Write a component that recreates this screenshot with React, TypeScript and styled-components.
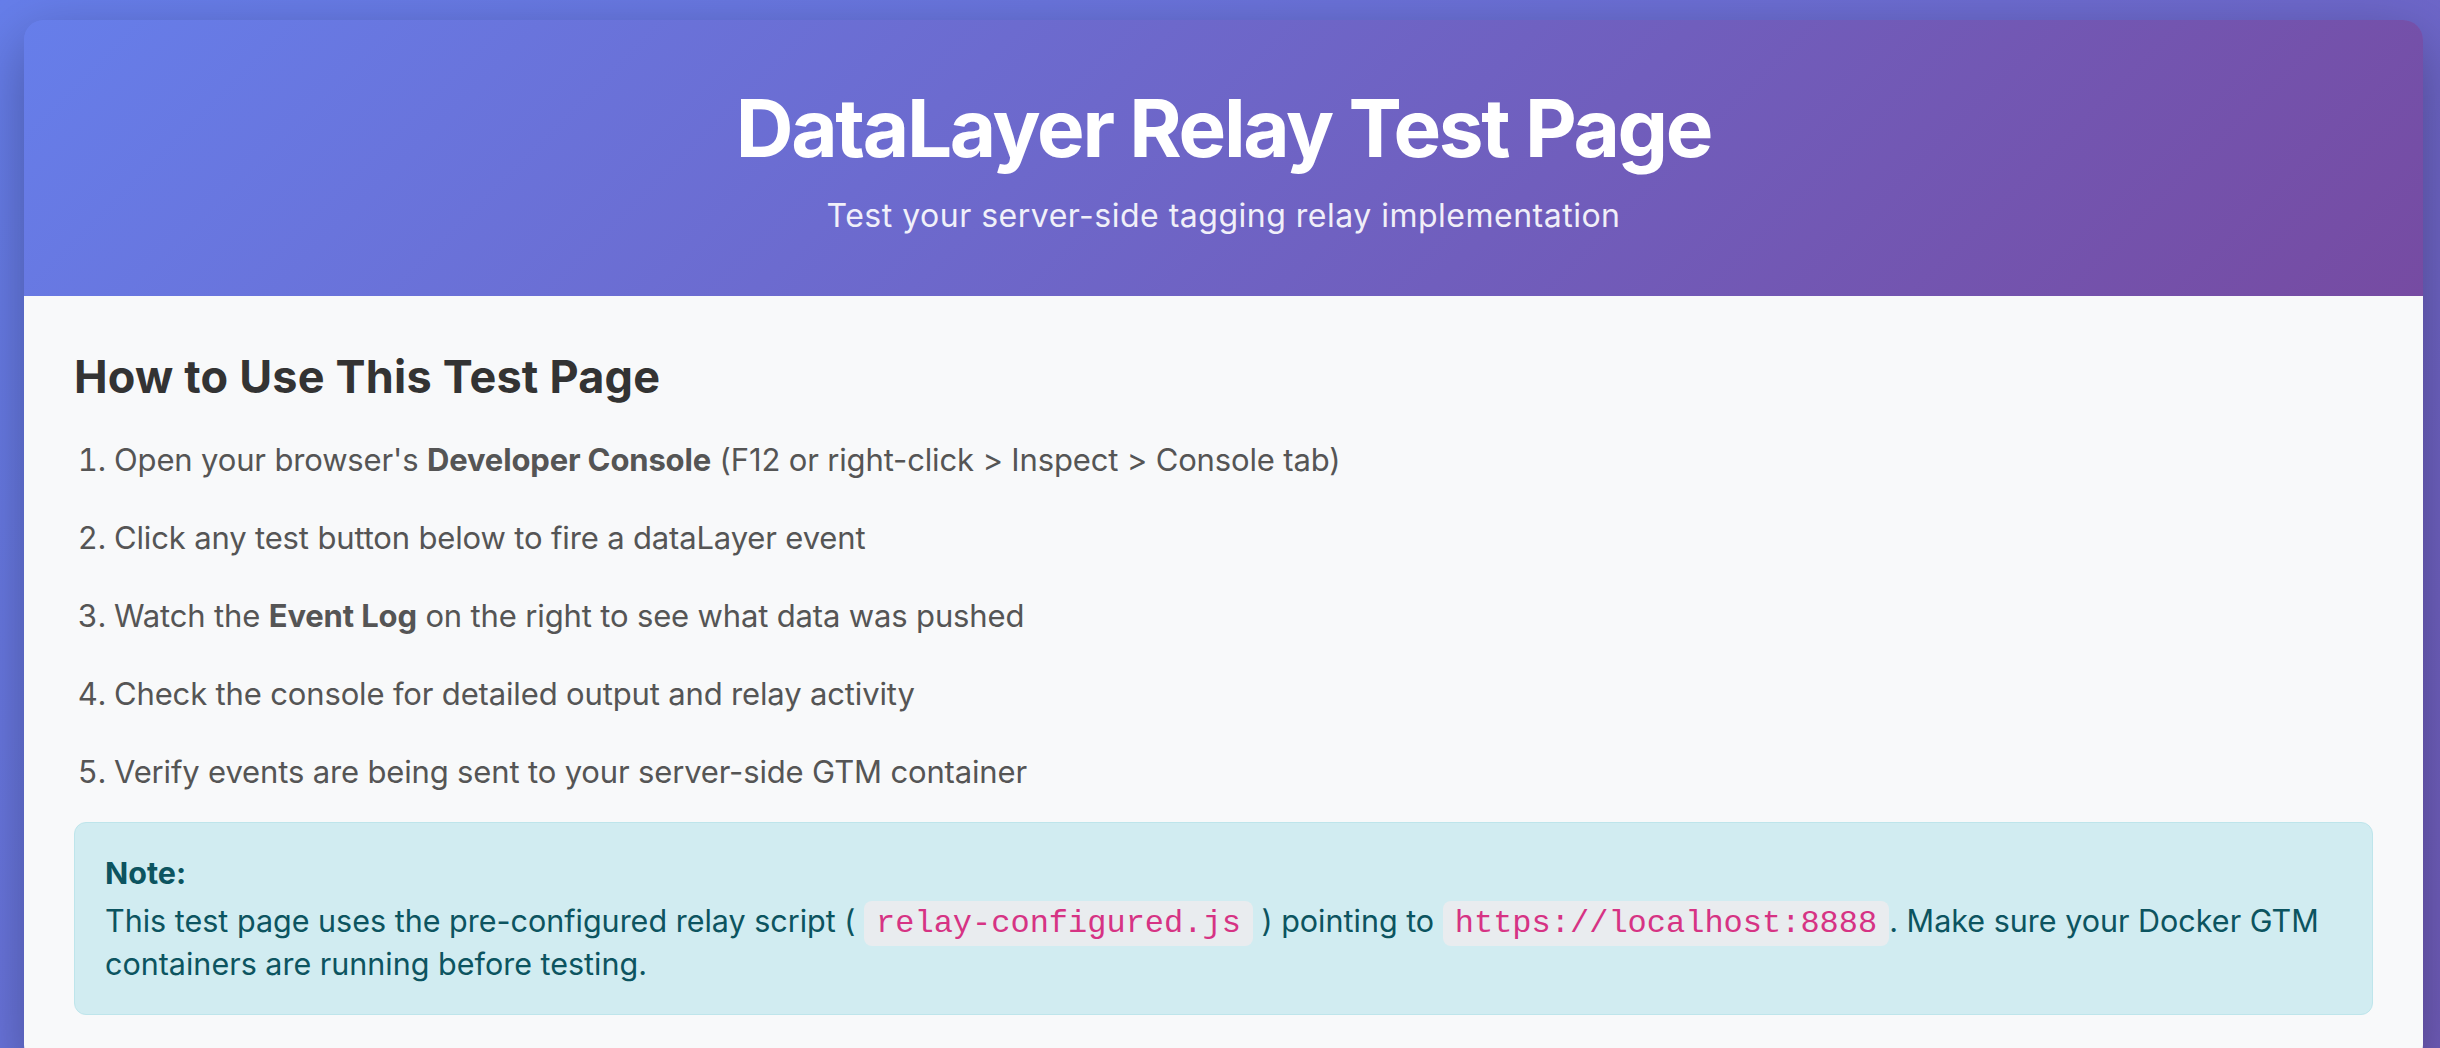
import * as React from 'react';
import styled, { createGlobalStyle } from 'styled-components';

const GlobalStyle = createGlobalStyle`
  html, body {
    margin: 0;
    padding: 0;
  }
  body {
    font-family: Inter, "Noto Sans", "Liberation Sans", sans-serif;
    background: linear-gradient(135deg, #667eea 0%, #764ba2 100%);
    background-size: 100% 2900px;
    background-repeat: no-repeat;
    min-height: 100vh;
  }
`;

const Page = styled.div`
  padding: 20px 17px 0 24px;
`;

const Container = styled.div`
  border-radius: 20px;
  overflow: hidden;
  box-shadow: 0 20px 60px rgba(0, 0, 0, 0.3);
`;

const Header = styled.header`
  padding: 60px 40px;
  text-align: center;
  color: #fff;
  background: linear-gradient(135deg, #667eea 0%, #764ba2 100%);

  h1 {
    margin: 0 0 20px;
    font-size: 80px;
    line-height: 96px;
    font-weight: 700;
    letter-spacing: -2.3px;
  }

  p {
    margin: 0;
    font-size: 32px;
    line-height: 40px;
    letter-spacing: 0.5px;
    opacity: 0.9;
  }
`;

const Content = styled.main`
  padding: 50px;
  background: #f8f9fa;
`;

const SectionTitle = styled.h2`
  margin: 0 0 26px;
  font-size: 45px;
  line-height: 62px;
  font-weight: 700;
  letter-spacing: 0.2px;
  color: #333;
`;

const Steps = styled.ol`
  margin: 0 0 24px;
  padding-left: 40px;
  color: #555;
  font-size: 31px;
  line-height: 52px;
  letter-spacing: -0.15px;

  li:not(:last-child) {
    margin-bottom: 26px;
  }

  strong {
    font-weight: 700;
  }
`;

const Note = styled.div`
  padding: 30px;
  background: #d1ecf1;
  border: 1px solid #bee5eb;
  border-radius: 12px;
  color: #0c5460;
  font-size: 30.5px;
  line-height: 40px;
`;

const NoteTitle = styled.strong`
  display: block;
  margin-bottom: 8px;
  font-weight: 700;
`;

const Code = styled.code`
  padding: 4px 12px;
  border-radius: 8px;
  background: #e9ecef;
  color: #d63384;
  font-family: "Liberation Mono", "DejaVu Sans Mono", monospace;
  font-size: 32px;
`;

const steps: React.ReactNode[] = [
  <>Open your browser's <strong>Developer Console</strong> (F12 or right-click &gt; Inspect &gt; Console tab)</>,
  <>Click any test button below to fire a dataLayer event</>,
  <>Watch the <strong>Event Log</strong> on the right to see what data was pushed</>,
  <>Check the console for detailed output and relay activity</>,
  <>Verify events are being sent to your server-side GTM container</>,
];

export default function App() {
  return (
    <>
      <GlobalStyle />
      <Page>
        <Container>
          <Header>
            <h1>DataLayer Relay Test Page</h1>
            <p>Test your server-side tagging relay implementation</p>
          </Header>
          <Content>
            <SectionTitle>How to Use This Test Page</SectionTitle>
            <Steps>
              {steps.map((step, i) => (
                <li key={i}>{step}</li>
              ))}
            </Steps>
            <Note>
              <NoteTitle>Note:</NoteTitle>
              This test page uses the pre-configured relay script ( <Code>relay-configured.js</Code> ) pointing to{' '}
              <Code>https://localhost:8888</Code>. Make sure your Docker GTM containers are running before testing.
            </Note>
          </Content>
        </Container>
      </Page>
    </>
  );
}
